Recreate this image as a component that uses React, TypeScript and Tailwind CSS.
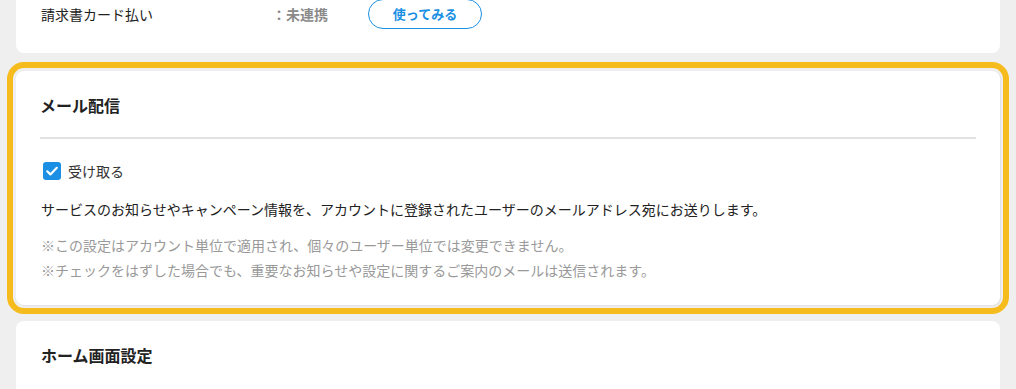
import React, { useState } from "react";

const font = { fontFamily: '"Noto Sans CJK JP", "Noto Sans", sans-serif' };

const CheckIcon = () => (
    <svg viewBox="0 0 18 18" className="w-[18px] h-[18px]">
        <rect width="18" height="18" rx="3" fill="#1a8fe3" />
        <path d="M4.2 9.3l3.2 3.1 6.4-6.6" fill="none" stroke="#fff" strokeWidth="2.2" strokeLinecap="round" strokeLinejoin="round" />
    </svg>
);

const App: React.FC = () => {
    const [receive, setReceive] = useState(true);

    return (
        <div className="h-[389px] overflow-hidden bg-[#efefef] px-4 flex flex-col gap-[18px] text-[#222]" style={font}>
            {/* 上のカード（スクロールで上部が切れている） */}
            <div className="bg-white rounded-b-lg px-[25px] pb-6">
                <div className="flex items-center -mt-px h-[30px]">
                    <span className="w-[231px] text-sm text-[#222]">請求書カード払い</span>
                    <span className="w-[96px] text-sm font-bold text-[#8a8a8a]">：未連携</span>
                    <button className="w-[114px] h-[30px] rounded-full border border-[#1a8fe3] text-[13px] font-bold text-[#1a8fe3]">
                        使ってみる
                    </button>
                </div>
            </div>

            {/* メール配信（ハイライト） */}
            <div className="bg-white rounded-lg px-6 pt-6 pb-[22px] outline-[6px] outline-solid outline-[#f6bc1d] outline-offset-[3px] shadow-[1px_1px_2px_rgba(0,0,0,0.06)]">
                <h2 className="text-base font-bold leading-5 pb-[22px] border-b-2 border-[#e2e2e2]">メール配信</h2>
                <label className="mt-5 flex items-center gap-[7px] h-6 pl-[3px] cursor-pointer" onClick={() => setReceive(!receive)}>
                    {receive ? <CheckIcon /> : <span className="w-[18px] h-[18px] rounded-[3px] border-2 border-[#aaa]" />}
                    <span className="text-sm text-[#333]">受け取る</span>
                </label>
                <p className="mt-[14px] text-sm leading-6 text-[#222] pl-px">
                    サービスのお知らせやキャンペーン情報を、アカウントに登録されたユーザーのメールアドレス宛にお送りします。
                </p>
                <div className="mt-3 text-sm leading-[25px] text-[#999] pl-px">
                    <p>※この設定はアカウント単位で適用され、個々のユーザー単位では変更できません。</p>
                    <p>※チェックをはずした場合でも、重要なお知らせや設定に関するご案内のメールは送信されます。</p>
                </div>
            </div>

            {/* ホーム画面設定 */}
            <div className="bg-white rounded-t-lg px-6 pt-6 pb-10 -mt-[2px] shrink-0">
                <h2 className="text-base font-bold leading-5 pl-px">ホーム画面設定</h2>
            </div>
        </div>
    );
};

export default App;
